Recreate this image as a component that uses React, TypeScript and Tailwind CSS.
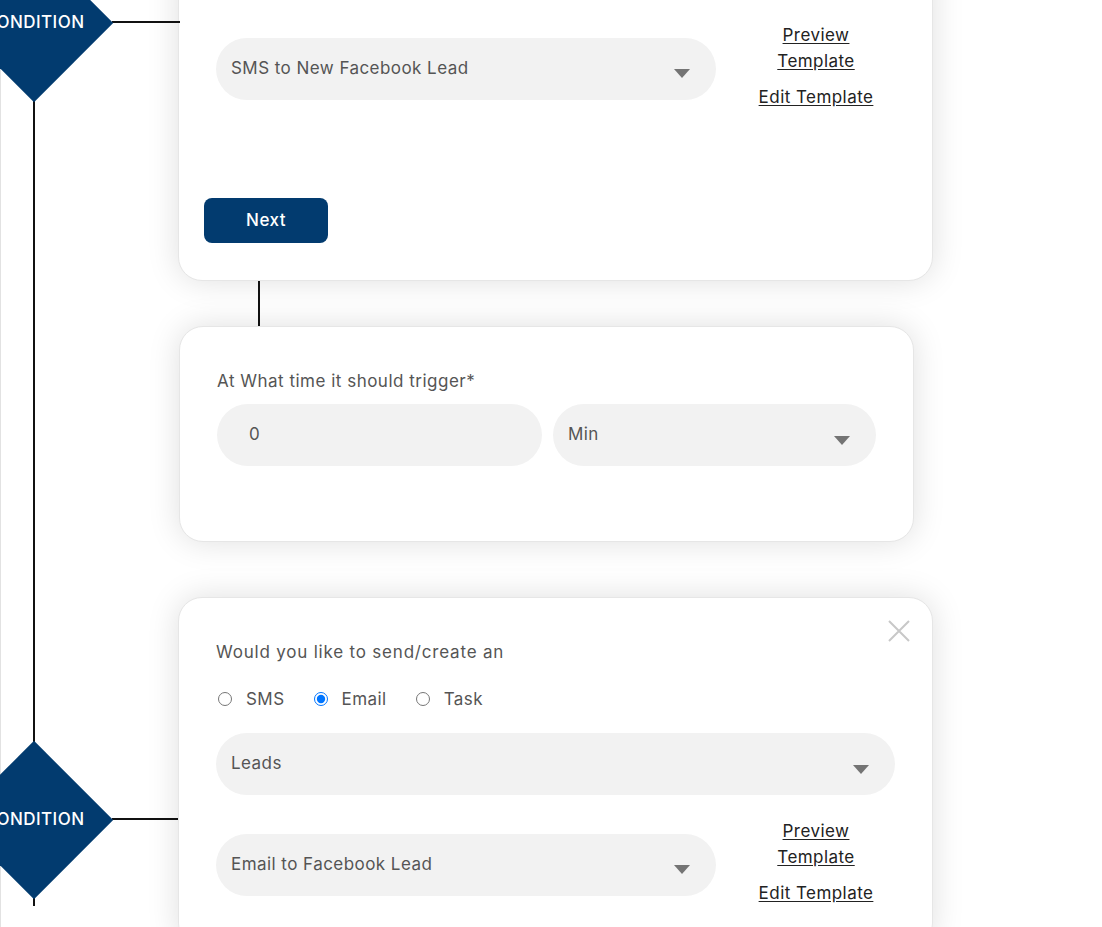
import React from 'react';

const font = { fontFamily: 'Inter, "Noto Sans", sans-serif' };

function Caret() {
  return (
    <svg width="16" height="9" viewBox="0 0 16 9" className="shrink-0">
      <path d="M0 0 H16 L8 9 Z" fill="#747474" />
    </svg>
  );
}

function SelectBox({ label, className = '' }: { label: string; className?: string }) {
  return (
    <div
      className={`flex h-[62px] items-center justify-between rounded-full bg-[#f2f2f2] pl-[15px] pr-[26px] text-[17px] text-[#555] ${className}`}
    >
      <span>{label}</span>
      <span className="mt-[10px]">
        <Caret />
      </span>
    </div>
  );
}

function TemplateLinks() {
  return (
    <div className="flex w-[120px] flex-col items-center text-center text-[17px] leading-[26px] text-[#222]">
      <a className="underline underline-offset-2">
        Preview
        <br />
        Template
      </a>
      <a className="mt-[10px] whitespace-nowrap underline underline-offset-2">Edit Template</a>
    </div>
  );
}

function Diamond({ top }: { top: number }) {
  return (
    <div className="absolute left-[-45px] h-[158px] w-[158px]" style={{ top }}>
      <div className="absolute left-[23px] top-[23px] h-[112px] w-[112px] rotate-45 bg-[#023b6f]" />
      <div className="absolute inset-0 flex items-center justify-center text-[17px] font-medium text-white">
        CONDITION
      </div>
    </div>
  );
}

export default function App() {
  return (
    <div className="relative h-[927px] w-[1102px] overflow-hidden bg-white tracking-[0.45px]" style={font}>
      {/* flow diagram rail */}
      <div className="absolute left-0 top-0 h-full w-px bg-[#e2e2e2]" />
      <div className="absolute left-[33px] top-[100px] h-[642px] w-[2px] bg-[#111]" />
      <div className="absolute left-[33px] top-[897px] h-[9px] w-[2px] bg-[#111]" />
      <div className="absolute left-[112px] top-[21px] h-[2px] w-[68px] bg-[#111]" />
      <div className="absolute left-[112px] top-[818px] h-[2px] w-[68px] bg-[#111]" />
      <Diamond top={-56} />
      <Diamond top={741} />

      <div className="ml-[178px] flex flex-col">
        {/* card 1 */}
        <div className="mt-[-40px] w-[755px] rounded-[24px] border border-[#e6e6e6] bg-white pb-[37px] pl-[25px] pt-[61px] shadow-[0_0_32px_rgba(0,0,0,0.13)]">
          <div className="flex items-center pl-[12px]">
            <SelectBox label="SMS to New Facebook Lead" className="mt-[5px] w-[500px]" />
            <div className="ml-[40px]">
              <TemplateLinks />
            </div>
          </div>
          <button className="mt-[88px] h-[45px] w-[124px] rounded-[8px] bg-[#023b6f] text-[17px] font-medium text-white">
            Next
          </button>
        </div>

        {/* connector */}
        <div className="ml-[80px] h-[45px] w-[2px] bg-[#111]" />

        {/* card 2 */}
        <div className="ml-px w-[735px] rounded-[24px] border border-[#e6e6e6] bg-white px-[37px] pb-[75px] pt-[43px] shadow-[0_0_32px_rgba(0,0,0,0.13)]">
          <div className="text-[17px] leading-[22px] tracking-[0.5px] text-[#555]">At What time it should trigger*</div>
          <div className="mt-[12px] flex gap-[11px]">
            <div className="flex h-[62px] w-[325px] items-center rounded-full bg-[#f2f2f2] pl-[32px] text-[17px] text-[#555]">
              0
            </div>
            <SelectBox label="Min" className="w-[323px]" />
          </div>
        </div>

        {/* card 3 */}
        <div className="relative mt-[55px] w-[755px] rounded-[24px] border border-[#e6e6e6] bg-white pb-[40px] pl-[37px] pr-[37px] pt-[43px] shadow-[0_0_32px_rgba(0,0,0,0.13)]">
          <svg className="absolute right-[21px] top-[21px]" width="24" height="24" viewBox="0 0 24 24">
            <path d="M2 2 L22 22 M22 2 L2 22" stroke="#c8c8c8" strokeWidth="2" />
          </svg>
          <div className="text-[17px] leading-[22px] tracking-[0.8px] text-[#555]">Would you like to send/create an</div>
          <div className="mt-[24px] flex items-center text-[17px] leading-[24px] text-[#555]">
            <label className="ml-[2px] flex items-center">
              <input type="radio" name="kind" readOnly className="m-0 h-[14px] w-[14px]" />
              <span className="ml-[14px]">SMS</span>
            </label>
            <label className="ml-[29px] flex items-center">
              <input type="radio" name="kind" readOnly checked className="m-0 h-[14px] w-[14px]" />
              <span className="ml-[14px]">Email</span>
            </label>
            <label className="ml-[29px] flex items-center">
              <input type="radio" name="kind" readOnly className="m-0 h-[14px] w-[14px]" />
              <span className="ml-[14px]">Task</span>
            </label>
          </div>
          <SelectBox label="Leads" className="mt-[22px] w-[679px]" />
          <div className="mt-[23px] flex items-center">
            <SelectBox label="Email to Facebook Lead" className="mt-[5px] w-[500px]" />
            <div className="ml-[40px]">
              <TemplateLinks />
            </div>
          </div>
        </div>
      </div>
    </div>
  );
}
